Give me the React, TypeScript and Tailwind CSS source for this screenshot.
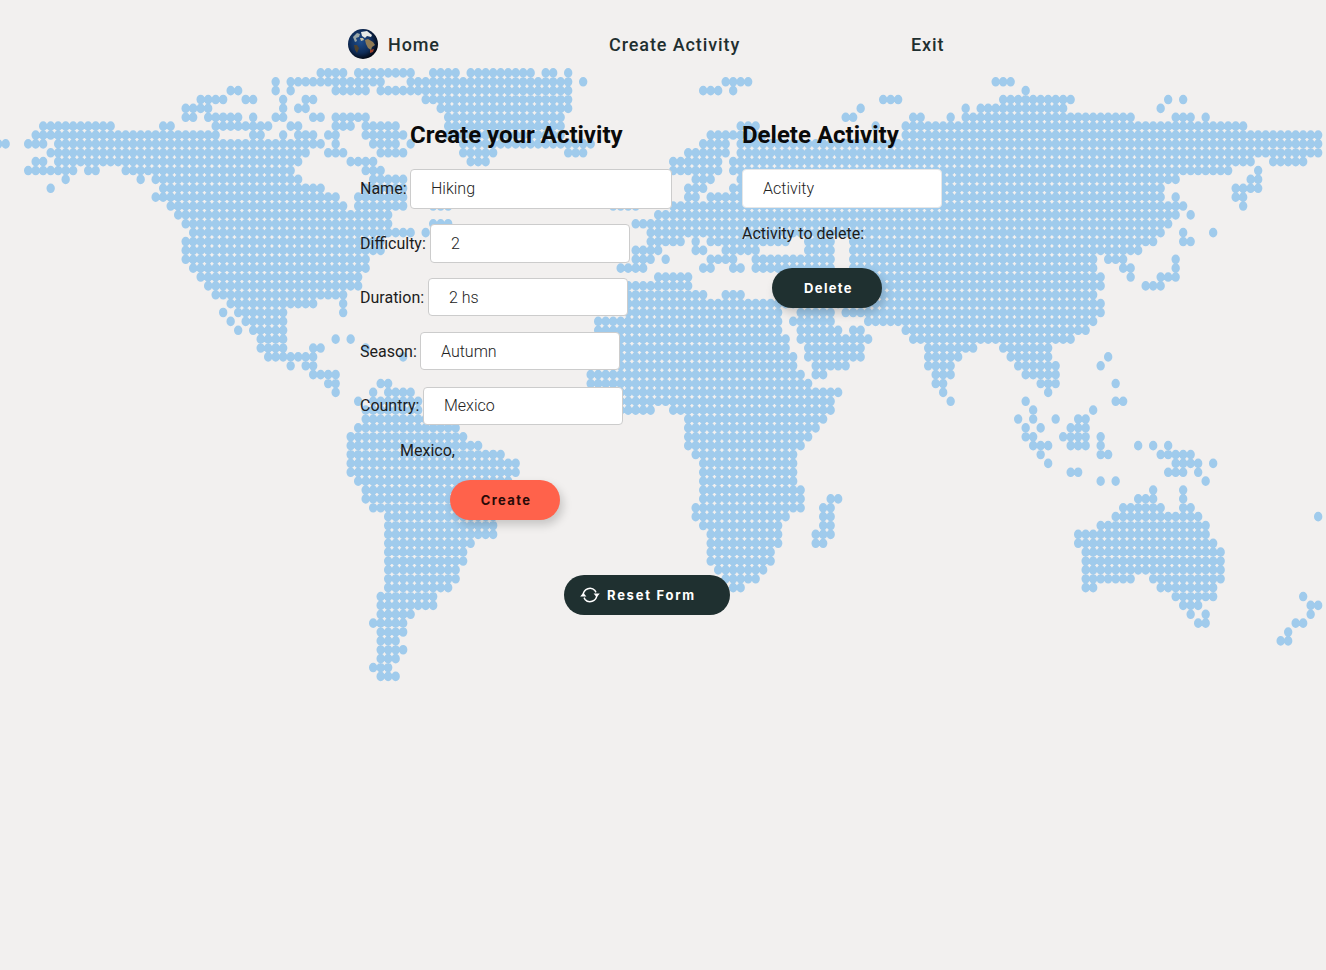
import React from "react";

// dotted world map, one string per row, "a-b" = run of columns
const MAP_ROWS = [
  "42-45 47-54 57-60 62-70 72-73 75",
  "36 38-50 54-75 77 96-99 132-134",
  "30-31 36 38 44-48 50-75 93-95 97 136",
  "26-29 32-33 37 40-41 56-75 117-119 133-142 155 157",
  "24-27 37 39-40 58-75 114 128 130-141 154",
  "24-25 27-31 33 36-37 41-42 44-48 59-74 112-113 121-122 126 128-150 156-158 160",
  "5-14 21-22 28-35 38-39 44-46 48-52 59-74 98-100 116 120-165",
  "4-28 33-34 37 39-41 43-44 48-53 59-74 94-101 120-175",
  "-1-0 3-5 7-42 44 49-52 54 61-78 93-96 98-175",
  "6-40 43-45 50-53 61-65 75-77 91-96 98-175",
  "4-5 7-39 46-49 62-64 89-95 97-166 169-173",
  "3-9 11-12 16-38 48-50 89-95 97-163 167",
  "8 18 20-39 49-53 92-94 98-156 166-167",
  "6 21-42 48-53 91-93 97-154 164-167",
  "20-44 47-53 91-92 94-154 156 164-165",
  "22-45 47-53 57-59 81-84 89-157 165",
  "23-51 87-156 158",
  "24-51 57-59 84-155",
  "25-54 56 86-154 157 161",
  "24-50 86-90 92 94-104 107-110 113-153 157-158",
  "24-50 84-87 92-93 96-100 107-110 113-151",
  "24-48 84-86 88 94-97 100-110 113-145 147-149 156",
  "25-48 82-85 93-94 97-98 100-110 113-145 149-150 156",
  "26-47 87-91 113-146 150 154-156",
  "27-47 83-91 113-146 152-154",
  "28-45 83-93 96-98 113-145",
  "30-41 45 83-146",
  "29 31-37 45 83-103 106-110 112-146",
  "30 32-37 79-103 105-110 115-145",
  "31 33-37 79-103 106-111 113-114 120-144",
  "34-37 44 46 80-104 106-115 121-142",
  "34-37 41-42 48 80-104 107-114 123-129 133-139",
  "35-41 53 80-105 107-114 123-127 134-139 147",
  "38 40-41 80-105 108-112 123-126 135-140 146",
  "41-44 78-106 108-109 124-126 136-140",
  "43-44 50-51 78-107 124-125 138-140 148",
  "44 49 51-54 81-111 125 139",
  "47 49-55 82-110 126 136 148-149",
  "48-55 81-86 89-110 137 145",
  "48-58 91-109 135 137 140 143-144",
  "47-60 91-108 136 138 142-144",
  "46-61 91-107 136-137 141-144 146",
  "46-63 91-106 137-139 142-144 146 151 153 155",
  "46-66 92-105 138 146-147 154-158",
  "46-68 93-105 139 156-159 161",
  "46-68 93-105 142-143 155-157 159",
  "47-67 93-105 146 148 160",
  "48-65 93-106 153 157",
  "48-65 93-106 110-111 151-153 157",
  "49-65 92-106 109-110 149-154 157-158",
  "51-65 92-104 109-110 148-159 175",
  "51-65 93-103 109-110 146-160",
  "51-65 94-103 108-110 143-160",
  "51-62 94-103 108-109 143-161",
  "51-61 94-102 144-162",
  "51-61 94-102 144-162",
  "51-60 95-101 144-162",
  "51-60 96-100 144-150 153-162",
  "51-59 97-98 144-145 154-161",
  "50-57 156-161 173",
  "50-57 157-159 174-175",
  "50-54 158 160 174",
  "49-53 159-160 172-173",
  "50-53 171",
  "50-52 170-171",
  "50-53",
  "50-52",
  "49-51",
  "50-52",
];

const RX = 4.2;
const RY = 4.8;

function buildDots() {
  let d = "";
  MAP_ROWS.forEach((row, r) => {
    const y = 72.9 + r * 8.875;
    for (const run of row.split(" ")) {
      const m = run.match(/^(-?\d+)(?:-(\d+))?$/);
      if (!m) continue;
      const from = Number(m[1]);
      const to = m[2] ? Number(m[2]) : from;
      for (let c = from; c <= to; c++) {
        const x = 5.67 + c * 7.5;
        d += `M${x - RX} ${y}a${RX} ${RY} 0 1 0 ${RX * 2} 0a${RX} ${RY} 0 1 0 ${-RX * 2} 0`;
      }
    }
  });
  return d;
}

const DOTS = buildDots();

function Globe() {
  return (
    <svg width="30" height="30" viewBox="0 0 30 30">
      <defs>
        <radialGradient id="sea" cx="42%" cy="42%" r="62%">
          <stop offset="0%" stopColor="#1f4f8f" />
          <stop offset="62%" stopColor="#0f2c58" />
          <stop offset="100%" stopColor="#01030a" />
        </radialGradient>
      </defs>
      <circle cx="15" cy="15" r="15" fill="url(#sea)" />
      <path d="M5 8l4-4 3 1-1 3-3 1 1 3-2 1z" fill="#9aa7a8" />
      <path d="M13 3l6-1 5 4-1 2-4-1-2 2-3-2z" fill="#e6e9e6" />
      <path d="M17 11l3-1 5 3 2 3-3 2-1 3-3-2-2-4z" fill="#8f7a55" />
      <path d="M6 16l3 0 2 3-2 5-2-3z" fill="#4d4230" />
      <path d="M22 21l4-1-1 3-3 1z" fill="#9c3f28" />
      <path d="M12 9l3 0 1 2-3 1z" fill="#c8c3a8" />
    </svg>
  );
}

function SyncIcon() {
  return (
    <svg width="20" height="20" viewBox="0 0 20 20" fill="none" className="shrink-0">
      <path d="M3.2 9.5a6.8 6.8 0 0 1 11.8-3.9l1 1.7" stroke="#fff" strokeWidth="1.5" />
      <path d="M16.8 10.5a6.8 6.8 0 0 1-11.8 3.9l-1-1.7" stroke="#fff" strokeWidth="1.5" />
      <path d="M13.6 8.6h6.2l-3.1 3.6zM.2 11.4h6.2l-3.1-3.6z" fill="#fff" />
    </svg>
  );
}

function Field({ label, value, labelW, inputW, h, mt, labelPad = "", inputPad = "" }: { label: string; value: string; labelW: string; inputW: string; h: string; mt: string; labelPad?: string; inputPad?: string }) {
  return (
    <div className={`flex items-center ${mt}`}>
      <label className={`${labelW} ${labelPad} text-[16px] text-[#1c1c1c]`}>{label}</label>
      <input
        readOnly
        value={value}
        className={`${inputW} ${h} ${inputPad} bg-white border border-[#ccc] rounded-[4px] pl-[20px] text-[16px] font-light text-[#222] outline-none`}
      />
    </div>
  );
}

export default function App() {
  return (
    <div className="relative min-h-[970px] overflow-hidden bg-[#f2f0ef] font-['Roboto',sans-serif]">
      <svg className="absolute inset-0 pointer-events-none" width="1326" height="970">
        <path d={DOTS} fill="#a0cbec" />
      </svg>

      <div className="relative">
        {/* Nav */}
        <nav className="flex items-center h-[88px] pl-[348px] text-[18px] font-medium tracking-[0.9px] text-[#1f2f30]">
          <div className="flex items-center w-[261px]">
            <Globe />
            <span className="ml-[10px]">Home</span>
          </div>
          <span className="w-[302px]">Create Activity</span>
          <span>Exit</span>
        </nav>

        <div className="flex pl-[360px] pt-[32px]">
          {/* Create form */}
          <div className="w-[382px]">
            <h1 className="ml-[50px] h-[30px] leading-[30px] text-[24px] font-bold text-[#0a0a0a]">Create your Activity</h1>
            <Field label="Name:" value="Hiking" labelW="w-[50px]" inputW="w-[262px]" h="h-[40px]" mt="mt-[19px]" inputPad="pb-[2px]" />
            <Field label="Difficulty:" value="2" labelW="w-[70px]" inputW="w-[200px]" h="h-[39px]" mt="mt-[15px]" />
            <Field label="Duration:" value="2 hs" labelW="w-[68px]" inputW="w-[200px]" h="h-[38px]" mt="mt-[15px]" labelPad="pt-[2px]" />
            <Field label="Season:" value="Autumn" labelW="w-[60px]" inputW="w-[200px]" h="h-[38px]" mt="mt-[16px]" labelPad="pt-[2px]" />
            <Field label="Country:" value="Mexico" labelW="w-[63px]" inputW="w-[200px]" h="h-[38px]" mt="mt-[17px]" inputPad="pb-[2px]" />
            <p className="ml-[40px] mt-[16px] h-[20px] leading-[20px] text-[16px] text-[#1c1c1c]">Mexico,</p>
            <button className="block ml-[90px] mt-[19px] w-[110px] h-[40px] pt-[2px] pl-[2px] rounded-full bg-[#ff624b] font-['Inter',sans-serif] text-[13px] font-bold tracking-[1.35px] text-[#2a0a08] shadow-[3px_5px_10px_rgba(0,0,0,0.18)]">
              Create
            </button>
          </div>

          {/* Delete form */}
          <div>
            <h1 className="h-[30px] leading-[30px] text-[24px] font-bold text-[#0a0a0a]">Delete Activity</h1>
            <input
              readOnly
              value="Activity"
              className="block mt-[19px] w-[200px] h-[39px] bg-white border border-[#e6e6e6] rounded-[4px] pl-[20px] text-[16px] font-light text-[#222] outline-none"
            />
            <p className="mt-[16px] h-[20px] leading-[20px] text-[16px] text-[#1c1c1c]">Activity to delete:</p>
            <button className="block ml-[30px] mt-[24px] w-[110px] h-[40px] pt-[2px] pl-[3px] rounded-full bg-[#1f3030] font-['Inter',sans-serif] text-[13px] font-bold tracking-[1.35px] text-white shadow-[3px_5px_10px_rgba(0,0,0,0.18)]">
              Delete
            </button>
          </div>
        </div>

        <button className="flex items-center ml-[564px] mt-[55px] w-[166px] h-[40px] pl-[16px] gap-[7px] rounded-full bg-[#1f3030] font-['Inter',sans-serif] text-[13px] font-bold tracking-[1.75px] text-white">
          <SyncIcon />
          <span className="pt-[2px]">Reset Form</span>
        </button>
      </div>
    </div>
  );
}
